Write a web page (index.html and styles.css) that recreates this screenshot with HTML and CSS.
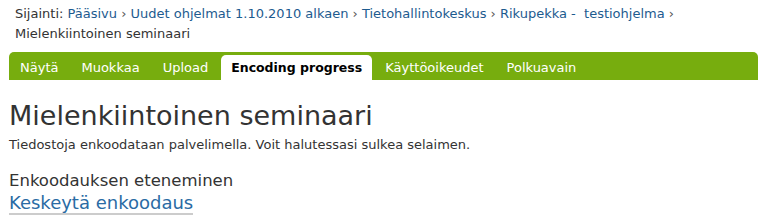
FILE: index.html
```html
<!DOCTYPE html>
<html lang="fi">
<head>
  <meta charset="UTF-8">
  <title>Mielenkiintoinen seminaari</title>
  <link rel="stylesheet" href="styles.css">
</head>
<body>

  <div class="breadcrumb">
    Sijainti:
    <a href="#">Pääsivu</a> <span class="sep">›</span>
    <a href="#">Uudet ohjelmat 1.10.2010 alkaen</a> <span class="sep">›</span>
    <a href="#">Tietohallintokeskus</a> <span class="sep">›</span>
    <a href="#">Rikupekka - &nbsp;testiohjelma</a> <span class="sep">›</span>
    <br>
    Mielenkiintoinen seminaari
  </div>

  <ul class="tabs">
    <li><a href="#">Näytä</a></li>
    <li><a href="#">Muokkaa</a></li>
    <li><a href="#">Upload</a></li>
    <li class="active"><a href="#">Encoding progress</a></li>
    <li><a href="#">Käyttöoikeudet</a></li>
    <li><a href="#">Polkuavain</a></li>
  </ul>

  <main>
    <h1>Mielenkiintoinen seminaari</h1>
    <p class="info">Tiedostoja enkoodataan palvelimella. Voit halutessasi sulkea selaimen.</p>

    <h2>Enkoodauksen eteneminen</h2>
    <a href="#" class="cancel-link">Keskeytä enkoodaus</a>
  </main>

</body>
</html>
```

FILE: styles.css
```css
body {
  margin: 0;
  padding: 0 9px;
  font-family: "DejaVu Sans", Verdana, sans-serif;
  color: #333;
  background: #fff;
}

a {
  text-decoration: none;
}

.breadcrumb {
  padding: 4px 6px 0;
  font-size: 13px;
  line-height: 20px;
  color: #333;
}

.breadcrumb a {
  color: #1d5b8f;
}

.breadcrumb .sep {
  color: #555;
}

.tabs {
  display: flex;
  list-style: none;
  margin: 8px 0 0;
  padding: 3px 0 0 1px;
  height: 25px;
  background: #77ad0e;
  border-radius: 5px 5px 0 0;
}

.tabs li {
  margin-right: 3px;
}

.tabs a {
  display: block;
  padding: 0 10px;
  height: 25px;
  line-height: 26px;
  font-size: 13px;
  color: #fff;
}

.tabs li.active a {
  background: #fff;
  color: #000;
  font-weight: bold;
  font-size: 12.5px;
  border-radius: 5px 5px 0 0;
}

h1 {
  margin: 19px 0 0;
  font-size: 27px;
  font-weight: normal;
  line-height: 34px;
  color: #333;
}

.info {
  margin: 3px 0 0;
  font-size: 13px;
  line-height: 18px;
}

h2 {
  margin: 17px 0 0;
  font-size: 16.5px;
  font-weight: normal;
  line-height: 20px;
  color: #333;
}

.cancel-link {
  display: inline-block;
  margin-top: 1px;
  font-size: 18px;
  line-height: 21px;
  color: #2a6ba4;
  border-bottom: 2px solid #ccc;
}
```
